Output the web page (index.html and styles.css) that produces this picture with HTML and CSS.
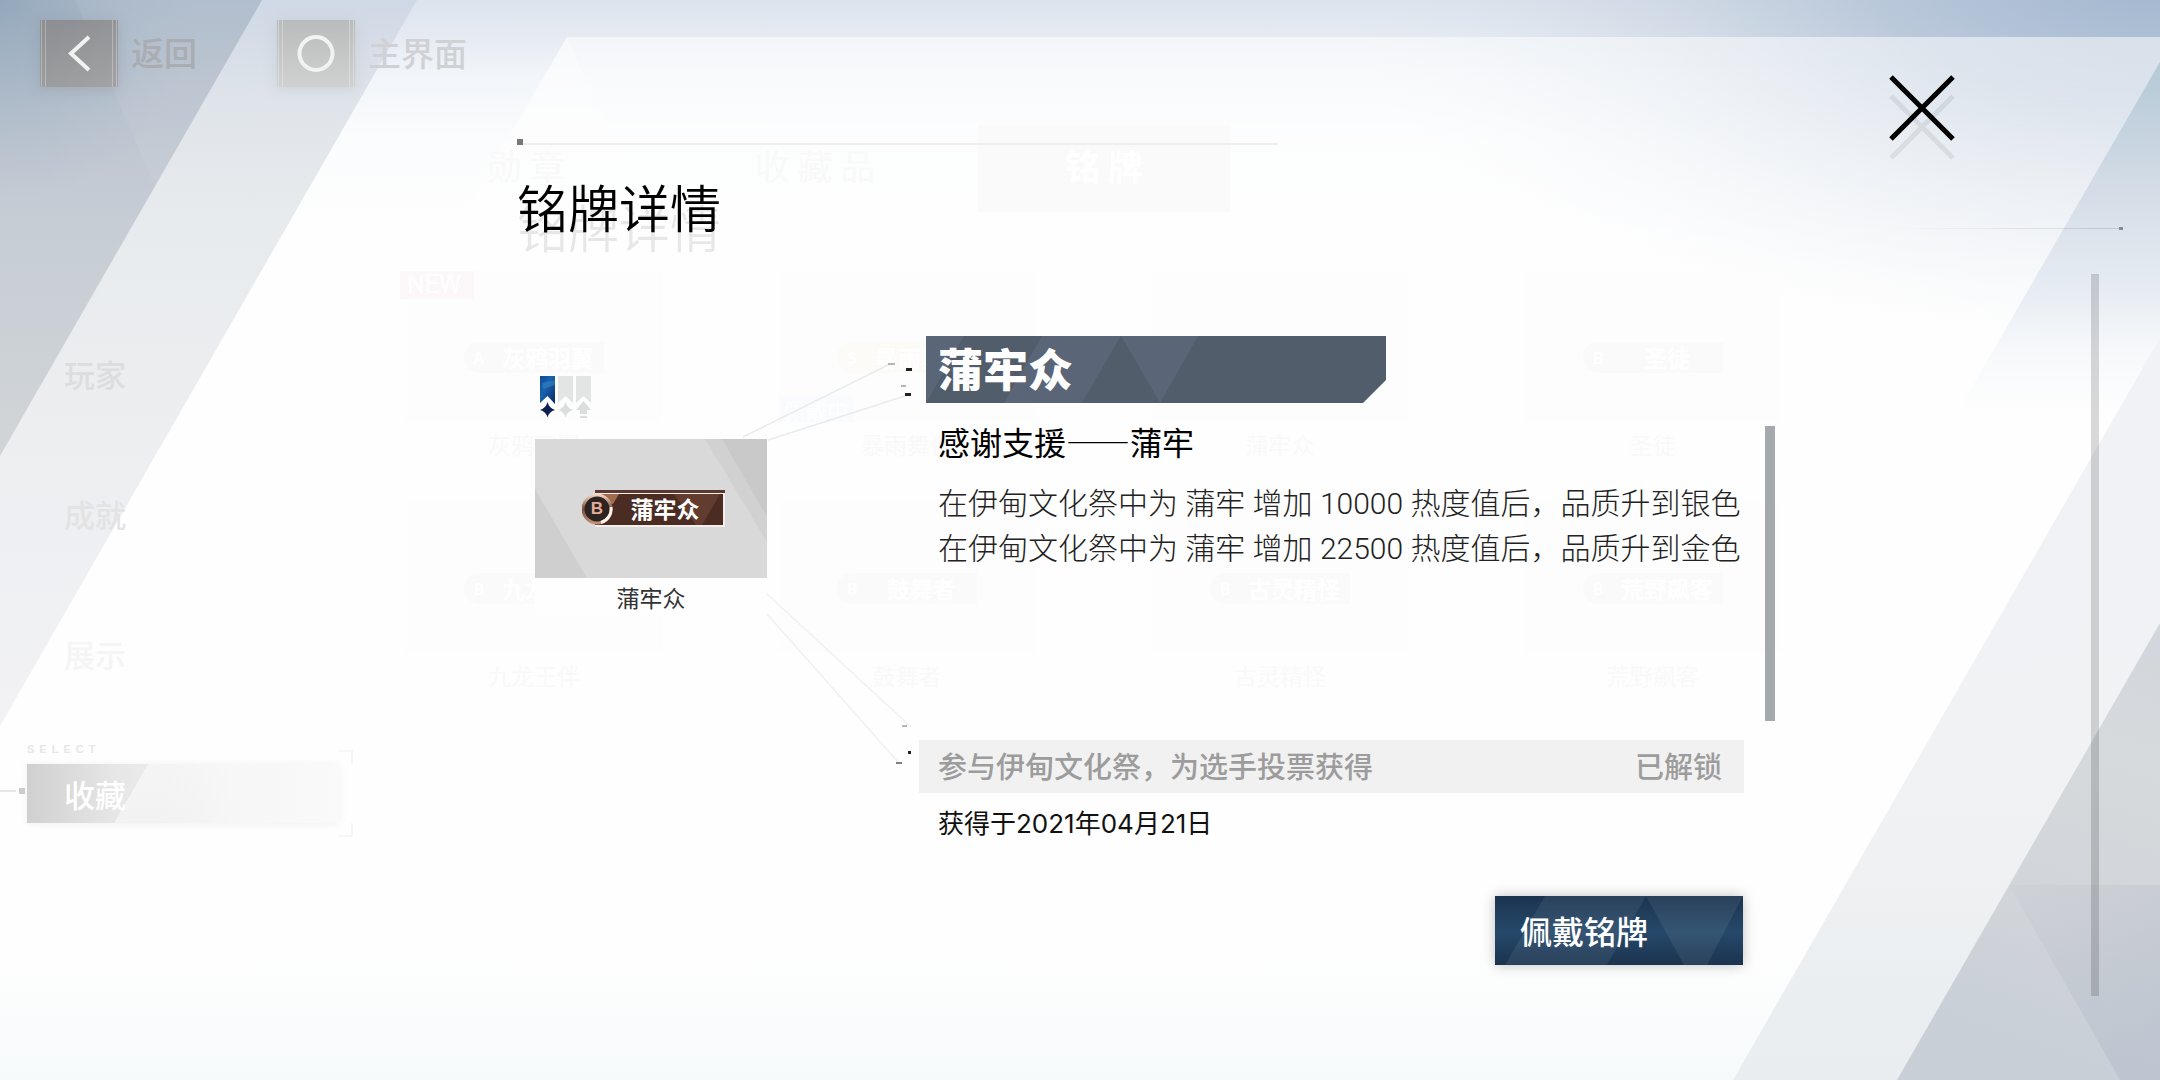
FILE: index.html
```html
<!DOCTYPE html>
<html lang="zh-CN">
<head>
<meta charset="utf-8">
<meta name="viewport" content="width=device-width, initial-scale=1">
<title>铭牌详情</title>
<link rel="stylesheet" href="styles.css">
</head>
<body>
<div class="screen">
  <svg class="backdrop" viewBox="0 0 2160 1080" preserveAspectRatio="none" aria-hidden="true">
    <defs>
      <linearGradient id="base" x1="0" y1="0" x2="0" y2="1">
        <stop offset="0" stop-color="#dce3ed"/><stop offset=".034" stop-color="#e6ebf2"/>
        <stop offset=".07" stop-color="#f2f5f9"/><stop offset=".13" stop-color="#fbfcfd"/>
        <stop offset=".22" stop-color="#fefefe"/><stop offset=".88" stop-color="#fefefe"/>
        <stop offset="1" stop-color="#f7fafb"/>
      </linearGradient>
      <radialGradient id="sky" gradientUnits="userSpaceOnUse" cx="0" cy="0" r="1" gradientTransform="translate(2160 -20) scale(820 360)">
        <stop offset="0" stop-color="#a2b6cf"/><stop offset=".35" stop-color="#afc0d4" stop-opacity=".78"/>
        <stop offset=".7" stop-color="#c6d1df" stop-opacity=".34"/><stop offset="1" stop-color="#e3e9f1" stop-opacity="0"/>
      </radialGradient>
      <linearGradient id="veil" x1="0" y1="0" x2="0" y2="1">
        <stop offset="0" stop-color="#fff" stop-opacity=".52"/><stop offset=".5" stop-color="#fff" stop-opacity=".4"/><stop offset="1" stop-color="#fff" stop-opacity="0"/>
      </linearGradient>
      <linearGradient id="edge" x1="0" y1="0" x2="0" y2="1">
        <stop offset="0" stop-color="#adbaca"/><stop offset=".25" stop-color="#bcc5d0"/>
        <stop offset=".5" stop-color="#c7cdd5"/><stop offset="1" stop-color="#d1d5d7"/>
      </linearGradient>
      <radialGradient id="edgeCorner" gradientUnits="userSpaceOnUse" cx="0" cy="0" r="200">
        <stop offset="0" stop-color="#8ba2b6" stop-opacity=".75"/><stop offset="1" stop-color="#a5b5c6" stop-opacity="0"/>
      </radialGradient>
      <linearGradient id="band" x1="0" y1="0" x2="0" y2="1">
        <stop offset="0" stop-color="#cfd8e5"/><stop offset=".14" stop-color="#dfe4ea"/>
        <stop offset=".3" stop-color="#e8ebed"/><stop offset="1" stop-color="#f2f2f5"/>
      </linearGradient>
      <linearGradient id="wedge" x1="0" y1="0" x2="0" y2="1">
        <stop offset="0" stop-color="#a8c0cf" stop-opacity=".75"/><stop offset=".35" stop-color="#c3d0dd" stop-opacity=".6"/>
        <stop offset=".65" stop-color="#d6dfeb" stop-opacity=".5"/><stop offset="1" stop-color="#eef2f8" stop-opacity="0"/>
      </linearGradient>
      <linearGradient id="low" x1="1" y1="0" x2=".8" y2="1">
        <stop offset="0" stop-color="#d2d5dc"/><stop offset=".3" stop-color="#d6dadc"/>
        <stop offset=".7" stop-color="#d1d4d9"/><stop offset="1" stop-color="#c8cfd7"/>
      </linearGradient>
      <linearGradient id="lowShade" x1="0" y1="0" x2=".6" y2="1">
        <stop offset="0" stop-color="#b9bcc4" stop-opacity=".12"/><stop offset="1" stop-color="#b4bfcc" stop-opacity=".6"/>
      </linearGradient>
      <linearGradient id="lowBand" x1="0" y1="0" x2="0" y2="1">
        <stop offset="0" stop-color="#f0f2f6"/><stop offset=".6" stop-color="#f1f2f4"/><stop offset="1" stop-color="#e9edef"/>
      </linearGradient>
    </defs>
    <rect width="2160" height="1080" fill="url(#base)"/>
    <rect x="1200" width="960" height="400" fill="url(#sky)"/>
    <polygon points="567,37 2160,37 2160,340 393,340" fill="url(#veil)"/>
    <polygon points="567,37 640,200 470,200" fill="#fff" fill-opacity=".3"/>
    <polygon points="2160,62 2160,420 1953,420" fill="url(#wedge)"/>
    <polygon points="0,0 417,0 0,726" fill="url(#band)"/>
    <polygon points="0,0 262,0 0,456" fill="url(#edge)"/>
    <polygon points="0,0 262,0 0,456" fill="url(#edgeCorner)"/>
    <polygon points="75,0 155,187 262,0" fill="#fff" fill-opacity=".06"/>
    <polygon points="2160,338 2160,1080 1733,1080" fill="url(#lowBand)"/>
    <polygon points="2160,623 2160,1080 1897,1080" fill="url(#low)"/>
    <polygon points="2009,885 2120,1080 2160,1080 2160,885" fill="url(#lowShade)"/>
  </svg>

  <div class="lobby">
    <header class="topbar">
      <a class="topbar-link" href="#back">
        <span class="key key-back"><svg width="78" height="67" viewBox="0 0 78 67"><path class="key-trim" d="M1.500 0v67M5.500 0v67M72.500 0v67M76.500 0v67"/><path d="M49 17 31 33.500 49 50"/></svg></span>
        返回
      </a>
      <a class="topbar-link topbar-link-home" href="#home">
        <span class="key key-home"><svg width="78" height="67" viewBox="0 0 78 67"><path class="key-trim" d="M1.500 0v67M5.500 0v67M72.500 0v67M76.500 0v67"/><circle cx="39" cy="33.500" r="16.500"/></svg></span>
        主界面
      </a>
    </header>
    <div class="lobby-main">
      <nav class="menu">
        <a class="menu-item menu-player" href="#player">玩家</a>
        <a class="menu-item menu-feat" href="#feat">成就</a>
        <a class="menu-item menu-show" href="#show">展示</a>
        <a class="menu-item menu-current" href="#collection" aria-current="page"><span class="menu-hint">SELECT</span>收藏</a>
      </nav>
      <div class="collection">
        <div class="tabs">
          <button class="tab" type="button">勋 章</button>
          <button class="tab" type="button">收 藏 品</button>
          <button class="tab tab-current" type="button">铭 牌</button>
        </div>
        <div class="cards">
          <div class="card"><span class="card-new">NEW</span><div class="card-pic"><span class="chip"><i>A</i>灰鸦羽翼</span></div><p>灰鸦羽翼</p></div>
          <div class="card"><div class="card-pic"><span class="chip chip-warm"><i>S</i>暴雨舞伴</span><span class="card-worn">佩戴中</span></div><p>暴雨舞伴</p></div>
          <div class="card"><div class="card-pic"><span class="chip"><i>B</i>蒲牢众</span></div><p>蒲牢众</p></div>
          <div class="card"><div class="card-pic"><span class="chip"><i>B</i>圣徒</span></div><p>圣徒</p></div>
          <div class="card"><div class="card-pic"><span class="chip"><i>B</i>九龙王伴</span></div><p>九龙王伴</p></div>
          <div class="card"><div class="card-pic"><span class="chip"><i>B</i>鼓舞者</span></div><p>鼓舞者</p></div>
          <div class="card"><div class="card-pic"><span class="chip"><i>B</i>古灵精怪</span></div><p>古灵精怪</p></div>
          <div class="card"><div class="card-pic"><span class="chip"><i>B</i>荒野飙客</span></div><p>荒野飙客</p></div>
        </div>
      </div>
      <div class="rail">
        <div class="rail-line"></div>
        <div class="rail-thumb"></div>
      </div>
    </div>
  </div>

  <section class="dialog" role="dialog" aria-labelledby="dialog-title">
    <div class="dialog-content">
      <div class="rule"></div>
      <h1 class="dialog-title" id="dialog-title">铭牌详情</h1>
      <div class="detail">
        <div class="preview">
          <svg class="ribbons" width="52" height="43" viewBox="0 0 52 43" aria-label="品质">
            <defs>
              <linearGradient id="blue" x1="0" y1="0" x2="1" y2="1"><stop offset="0" stop-color="#0a4a94"/><stop offset=".4" stop-color="#1a62b0"/><stop offset="1" stop-color="#082862"/></linearGradient>
            </defs>
            <path d="M0 1h15v28L7.500 21 0 28z" fill="url(#blue)"/>
            <path d="M2 8 15 5v5L3 14z" fill="#3a8cc4" fill-opacity=".5"/>
            <path d="M7.500 27Q9 33 15 35 9 36.500 7.500 42.500 6 36.500 0 35 6 33 7.500 27z" fill="#0f1f52"/>
            <path d="M18 1h15v27l-7.500-7L18 28zM36 1h15v27l-7.500-7-7.500 7z" fill="#e3e5e5"/>
            <path d="M25.500 27Q27 33 33 35 27 36.500 25.500 42.500 24 36.500 18 35 24 33 25.500 27z" fill="#dcdede"/>
            <path d="M43.500 26l7.500 9h-4v4h-7v-4h-4zM40 41h7v2h-7z" fill="#dcdede"/>
          </svg>
          <figure class="plate-card">
            <div class="plate-stage">
              <svg class="plate-facets" viewBox="0 0 232 139" preserveAspectRatio="none" aria-hidden="true">
                <path d="M0 50 52 139H0z" fill="#cfcfcf"/>
                <path d="M170 0h62v103z" fill="#d1d1d1"/><path d="M187 0h45v78z" fill="#c9c9c9"/>
              </svg>
              <div class="plate">
                <svg class="plate-art" width="143" height="37" viewBox="0 0 143 37" aria-hidden="true">
                  <defs><linearGradient id="ring" x1="0" y1="0" x2="0" y2="1"><stop offset="0" stop-color="#f0d3c0"/><stop offset=".5" stop-color="#7a4c3a"/><stop offset="1" stop-color="#c09078"/></linearGradient></defs>
                  <path d="M13 3h130v34H13z" fill="#f4eeec"/>
                  <path d="M13 0h130v3H13z" fill="#5a3a30"/>
                  <path d="M13 4h128v31H13z" fill="#4a2c23"/>
                  <path d="M92 4h46l-18 31h-6z" fill="#613c2f"/>
                  <path d="M13 4h24l-6 10-18-2z" fill="#a06c4e"/>
                  <circle cx="15" cy="19" r="14" fill="#2b2421" stroke="url(#ring)" stroke-width="3"/>
                  <path d="M29 17a14 14 0 0 1-10 15.500" fill="none" stroke="#fff3ea" stroke-width="3"/>
                </svg>
                <span class="plate-grade">B</span>
                <span class="plate-name">蒲牢众</span>
              </div>
            </div>
            <figcaption>蒲牢众</figcaption>
          </figure>
        </div>
        <svg class="leads" width="152" height="440" viewBox="767 336 152 440" aria-hidden="true">
          <g fill="none" stroke="#e9ebed" stroke-width="1.500"><path d="M743 437 890 364"/><path d="M768 440 908 395"/></g>
          <g fill="none" stroke="#f0f1f1" stroke-width="1.500"><path d="M767 594 911 727"/><path d="M767 614 898 762"/></g>
          <path d="M888 363h7v2h-7zM902 725h5v2h-5zM901 385h5v2h-5z" fill="#b4b6b8"/>
          <path d="M906 368h6v3h-6zM905 393h6v3h-6zM908 751h3v3h-3z" fill="#222"/>
          <path d="M896 762h6v2h-6z" fill="#808080"/>
        </svg>
        <div class="info">
          <div class="name-bar">
            <svg class="name-facets" viewBox="0 0 460 67" preserveAspectRatio="none" aria-hidden="true">
              <path d="M0 0h460v67H0z" fill="#525d6b"/>
              <path d="M0 0h38L0 67zM116 0h79l-39 67H78zM195 0h77l-38 67z" fill="#5a6677"/>
              <path d="M195 0 156 67h78z" fill="#525d6b"/>
            </svg>
            <h2>蒲牢众</h2>
          </div>
          <div class="story">
            <div class="story-text">
              <h3>感谢支援——蒲牢</h3>
              <p>在伊甸文化祭中为 蒲牢 增加 10000 热度值后，品质升到银色</p>
              <p>在伊甸文化祭中为 蒲牢 增加 22500 热度值后，品质升到金色</p>
            </div>
            <div class="story-thumb"></div>
          </div>
          <div class="unlock"><span>参与伊甸文化祭，为选手投票获得</span><span>已解锁</span></div>
          <p class="date">获得于2021年04月21日</p>
          <button class="wear" type="button">
            <svg class="wear-facets" viewBox="0 0 248 70" preserveAspectRatio="none" aria-hidden="true">
              <path d="M50 0h101l-39 70H10zM151 0h97l-36 70h-23z" fill="#fff" fill-opacity=".07"/>
            </svg>
            <span>佩戴铭牌</span>
          </button>
        </div>
      </div>
    </div>
    <button class="close" type="button" aria-label="关闭">
      <svg width="66" height="86" viewBox="0 0 66 86"><g fill="none" stroke-width="5"><path d="M2 21 64 83M64 21 2 83" stroke="#000" stroke-opacity=".07"/><path d="M2 2 64 64M64 2 2 64" stroke="#000"/></g></svg>
    </button>
  </section>
</div>
</body>
</html>
```

FILE: styles.css
```css
* { box-sizing: border-box; }

body {
  margin: 0;
  font-family: "Noto Sans CJK SC", "Noto Sans", sans-serif;
  color: #111;
  background: #fefefe;
}

h1, h2, h3, p, figure { margin: 0; }
a { color: inherit; text-decoration: none; }
button { padding: 0; border: 0; background: none; font: inherit; color: inherit; }
svg { display: block; }

/* The backdrop, the lobby page and the dialog share one grid cell. */
.screen { display: grid; position: relative; min-height: 100vh; overflow: hidden; }
.lobby, .dialog { grid-area: 1 / 1; position: relative; min-width: 0; }
.backdrop { position: absolute; inset: 0; width: 100%; height: 100%; }

/* Lobby */
.topbar { display: flex; gap: 80px; padding: 20px 40px 0; }
.topbar-link { display: flex; gap: 13px; font-size: 33px; line-height: 64px; font-weight: 500; color: #a9acb0; }
.topbar-link-home { color: #cfd1d5; }
.key { height: 67px; }
.key svg { fill: none; stroke: #f2f2f2; stroke-width: 4; }
.key .key-trim { stroke: #fff; stroke-opacity: .3; stroke-width: 1; }
.key-back { background: linear-gradient(160deg, #8b8d90, #a3a3a5); box-shadow: 0 2px 12px #8080804d; }
.key-home { background: linear-gradient(#b9bcbc, #d0d0d0); box-shadow: 0 2px 12px #a0a0a040; }

.lobby-main { display: grid; grid-template-columns: 312px minmax(0, 1fr) 233px; gap: 61px; padding: 0 37px 0 27px; }

.menu { display: flex; flex-direction: column; gap: 81px; padding-top: 257px; }
.menu-item { position: relative; padding-left: 37px; font-size: 31px; line-height: 59px; font-weight: 500; }
.menu-player { color: #dcddde; }
.menu-feat { color: #e3e3e3; }
.menu-show { color: #f5f5f5; }
.menu-current {
  color: #fff;
  background: linear-gradient(120deg, #fff0 35%, #ffffff80 35%, #fff0 70%), linear-gradient(90deg, #d0d0d0, #e6e6e6 28%, #f6f6f6 65%, #fafafa);
  box-shadow: 0 1px 8px #0000000f;
}
.menu-current::before {
  content: ""; position: absolute; left: -27px; top: 23px; width: 25px; height: 7px;
  background: linear-gradient(#ccc, #ccc) right / 6px 6px no-repeat, linear-gradient(#e6e6e6, #e6e6e6) left / 16px 2px no-repeat;
}
.menu-current::after {
  content: ""; position: absolute; right: -14px; top: -14px; width: 14px; height: 87px;
  background:
    linear-gradient(#f6f6f6, #f6f6f6) top / 100% 2px no-repeat,
    linear-gradient(#f6f6f6, #f6f6f6) bottom / 100% 2px no-repeat,
    linear-gradient(#f6f6f6, #f6f6f6) top right / 2px 14px no-repeat,
    linear-gradient(#f6f6f6, #f6f6f6) bottom right / 2px 14px no-repeat;
}
.menu-hint {
  position: absolute; left: 0; top: -23px;
  font: 700 11px/16px "Liberation Sans", sans-serif; letter-spacing: 5px; color: #e6e7e7;
}

.collection { padding: 38px 48px 0 0; }
.tabs { display: grid; grid-template-columns: repeat(3, 252px); gap: 37px; }
.tab { height: 87px; padding-bottom: 8px; font-size: 35px; line-height: 52px; color: #f9f9f9; }
.tab-current { font-weight: 700; color: #fff; background: #fafafa; }
.cards { display: grid; grid-template-columns: repeat(4, minmax(0, 1fr)); gap: 35px 117px; padding: 59px 0 0 6px; }
.card { position: relative; }
.card-pic { display: flex; position: relative; justify-content: center; height: 151px; padding-top: 71px; background: #fdfdfd; }
.card p { font-size: 23px; line-height: 45px; text-align: center; color: #f9f9f9; }
.card-new { position: absolute; z-index: 1; left: -6px; top: 0; width: 74px; padding-left: 7px; font-family: Roboto, sans-serif; font-size: 25px; line-height: 28px; color: #fff; background: #fcf8f9; }
.card-worn { position: absolute; left: 0; bottom: 0; width: 74px; font-size: 22px; line-height: 26px; text-align: center; color: #fff; background: #fafbfe; }
.chip { width: 140px; height: 31px; padding-left: 28px; position: relative; font-size: 23px; font-weight: 700; line-height: 31px; text-align: center; color: #fff; background: #fafafa; border-radius: 15px 0 0 15px; }
.chip-warm { background: #fdfbf8; }
.chip i { position: absolute; left: 0; top: 0; width: 30px; font-size: 16px; font-style: normal; }

.rail { display: flex; flex-direction: column; padding-top: 140px; }
.rail-line { height: 3px; background: linear-gradient(#888b90, #888b90) right / 4px 3px no-repeat, linear-gradient(90deg, #0000, #0000001f) center / 100% 1px no-repeat; }
.rail-thumb { align-self: flex-end; width: 8px; height: 722px; margin: 44px 24px 0 0; background: #00000026; }

/* Dialog */
.dialog { display: grid; grid-template-columns: 517fr minmax(0, 1258fr) 385fr; }
.dialog-content { grid-column: 2; padding-top: 139px; }
.rule { width: 761px; height: 6px; background: linear-gradient(#777, #777) left / 6px 6px no-repeat, linear-gradient(#eee, #eee) left bottom / 100% 2px no-repeat; }
.dialog-title { margin-top: 31px; font-size: 51px; line-height: 60px; font-weight: 350; color: #000; text-shadow: 0 20px #00000017; }
.close { grid-column: 3; align-self: start; justify-self: start; margin: 75px 0 0 114px; }

.detail { display: grid; grid-template-columns: 250px 152px minmax(0, 1fr); margin-top: 100px; }
.preview { padding: 39px 0 0 18px; }
.ribbons { margin-left: 5px; }
.plate-card { margin-top: 21px; }
.plate-stage { display: flex; align-items: center; justify-content: center; position: relative; height: 139px; padding-left: 4px; background: #d9d9d9; }
.plate-facets, .name-facets, .wear-facets { position: absolute; inset: 0; width: 100%; height: 100%; }
.plate { position: relative; width: 143px; height: 37px; }
.plate-art { position: absolute; inset: 0; }
.plate-grade { position: absolute; left: 0; top: 2px; width: 31px; font: 700 17px/34px "Liberation Sans", sans-serif; text-align: center; color: #e3ab98; }
.plate-name { position: absolute; left: 49px; top: 0; font-size: 23px; line-height: 36px; font-weight: 700; color: #fff; }
.plate-card figcaption { font-size: 23px; line-height: 38px; text-align: center; color: #333; background: #fefefe; }
.leads { overflow: visible; }

.info { display: flex; flex-direction: column; }
.name-bar { position: relative; width: 460px; height: 67px; margin-left: 7px; clip-path: polygon(0 0, 100% 0, 100% 44px, calc(100% - 23px) 100%, 0 100%); }
.name-bar h2 { position: relative; padding-left: 12px; font-size: 45px; line-height: 63px; font-weight: 900; color: #fff; }
.story { display: flex; justify-content: space-between; min-height: 295px; margin-top: 23px; padding-left: 19px; }
.story-text { padding-bottom: 20px; }
.story-text h3 { margin-bottom: 24px; font-size: 32px; line-height: 31px; font-weight: 400; color: #000; }
.story-text p { font-family: Roboto, "Noto Sans CJK SC", sans-serif; font-size: 30px; line-height: 45px; font-weight: 300; color: #222; white-space: nowrap; }
.story-thumb { flex: none; width: 10px; background: #a5a8ad; }
.unlock { display: flex; justify-content: space-between; height: 53px; margin: 19px 31px 0 0; padding: 0 22px 0 19px; font-size: 29px; line-height: 51px; font-weight: 500; color: #9c9c9c; background: #f1f1f1; }
.date { margin-top: 13px; padding-left: 19px; font-family: Inter, "Noto Sans CJK SC", sans-serif; font-size: 26px; line-height: 36px; color: #111; }
.wear {
  position: relative; align-self: flex-end; width: 248px; height: 69px; margin: 54px 32px 0 0; padding-left: 25px;
  font-size: 32px; line-height: 67px; font-weight: 500; text-align: left; color: #fff;
  background: linear-gradient(#1b334f, #26496a 52%, #1b334f);
  box-shadow: 0 0 12px #00000040;
}
.wear span { position: relative; }
```
